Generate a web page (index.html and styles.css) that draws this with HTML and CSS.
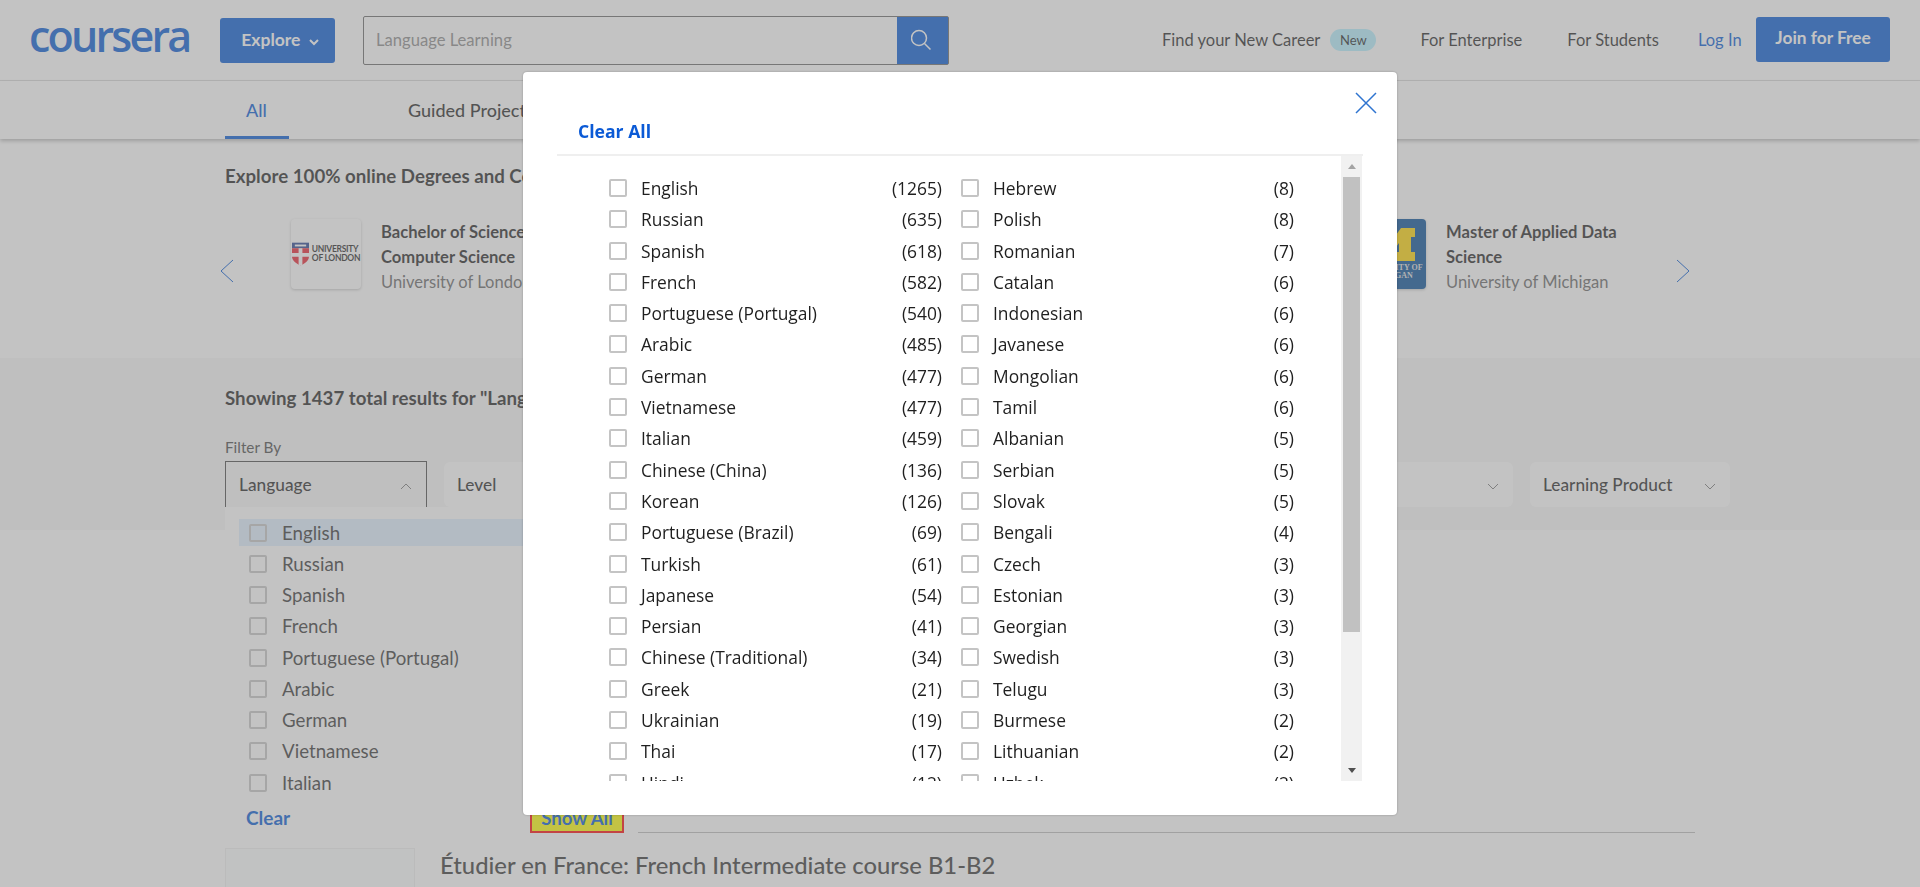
FILE: index.html
```html
<!DOCTYPE html>
<html lang="en">
<head>
  <meta charset="UTF-8">
  <title>Language Learning | Coursera</title>
  <link rel="stylesheet" href="styles.css">
</head>
<body>

  <header class="topbar">
    <div class="logo">coursera</div>
    <button class="explore">Explore
      <svg width="10" height="7" viewBox="0 0 10 7"><path d="M1 1l4 4 4-4" fill="none" stroke="#fff" stroke-width="2"/></svg>
    </button>
    <div class="search">
      <div class="search-text">Language Learning</div>
      <div class="search-btn">
        <svg width="24" height="24" viewBox="0 0 24 24"><circle cx="8" cy="10" r="7.5" fill="none" stroke="#fff" stroke-width="1.5"/><path d="M13.5 15.5l6 6" fill="none" stroke="#fff" stroke-width="1.5"/></svg>
      </div>
    </div>
    <nav class="topnav">
      <a class="career">Find your New Career</a>
      <span class="badge">New</span>
      <a class="enterprise">For Enterprise</a>
      <a class="students">For Students</a>
      <a class="login">Log In</a>
      <button class="join">Join for Free</button>
    </nav>
  </header>

  <div class="tabs">
    <a class="tab active">All</a>
    <a class="tab">Guided Projects</a>
  </div>

  <section class="degrees">
    <h2>Explore 100% online Degrees and Certificates on Coursera</h2>
    <div class="carousel">
      <svg class="arrow prev" width="14" height="24" viewBox="0 0 14 24"><path d="M13 1L1 12l12 11" fill="none" stroke="#0056d2" stroke-width="1"/></svg>
      <div class="degree first">
        <div class="uni-logo london">
          <svg width="17" height="24" viewBox="0 0 18 24"><path d="M0 0h18v6H0z" fill="#23408f"/><path d="M0 6h18v8c0 5-4 8-9 10-5-2-9-5-9-10z" fill="#e8212e"/><path d="M7 6h4v18H7zM0 11h18v4H0z" fill="#fff"/><path d="M3 2h12v2H3z" fill="#fff"/></svg>
          <div class="london-name">UNIVERSITY<br>OF LONDON</div>
        </div>
        <div class="degree-text">
          <div class="degree-title">Bachelor of Science in<br>Computer Science</div>
          <div class="degree-school">University of London</div>
        </div>
      </div>
      <div class="degree">
        <div class="uni-logo michigan">
          <svg width="48" height="33" viewBox="0 0 48 33"><path d="M0 0h14l10 14L34 0h14v9h-4v15h4v9H29v-9h3V15l-8 11-8-11v9h3v9H0v-9h4V9H0z" fill="#ffd400"/></svg>
          <div class="michigan-name">UNIVERSITY OF<br>MICHIGAN</div>
        </div>
        <div class="degree-text">
          <div class="degree-title">Master of Applied Data<br>Science</div>
          <div class="degree-school">University of Michigan</div>
        </div>
      </div>
      <svg class="arrow" width="14" height="24" viewBox="0 0 14 24"><path d="M1 1l12 11L1 23" fill="none" stroke="#0056d2" stroke-width="1"/></svg>
    </div>
  </section>

  <section class="results">
    <h2>Showing 1437 total results for "Language Learning"</h2>
    <div class="filter-label">Filter By</div>
    <div class="filters">
      <div class="filter open">
        <span>Language</span>
        <svg width="12" height="7" viewBox="0 0 12 7"><path d="M1 6l5-5 5 5" fill="none" stroke="#777" stroke-width="1"/></svg>
        <div class="dropdown">
          <label class="drop-row hover"><i class="box"></i>English</label>
          <label class="drop-row"><i class="box"></i>Russian</label>
          <label class="drop-row"><i class="box"></i>Spanish</label>
          <label class="drop-row"><i class="box"></i>French</label>
          <label class="drop-row"><i class="box"></i>Portuguese (Portugal)</label>
          <label class="drop-row"><i class="box"></i>Arabic</label>
          <label class="drop-row"><i class="box"></i>German</label>
          <label class="drop-row"><i class="box"></i>Vietnamese</label>
          <label class="drop-row"><i class="box"></i>Italian</label>
          <a class="drop-clear">Clear</a>
        </div>
      </div>
      <div class="filter level">
        <span>Level</span>
        <svg width="12" height="7" viewBox="0 0 12 7"><path d="M1 1l5 5 5-5" fill="none" stroke="#777" stroke-width="1"/></svg>
      </div>
      <div class="filter product">
        <span>Learning Product</span>
        <svg width="12" height="7" viewBox="0 0 12 7"><path d="M1 1l5 5 5-5" fill="none" stroke="#777" stroke-width="1"/></svg>
      </div>
    </div>
  </section>

  <section class="listing">
    <div class="show-row">
      <a class="show-all">Show All</a>
      <div class="show-line"></div>
    </div>
    <div class="course">
      <div class="course-thumb"></div>
      <div class="course-title">Étudier en France: French Intermediate course B1-B2</div>
    </div>
  </section>

  <div class="overlay">
    <div class="modal">
      <svg class="close" width="22" height="22" viewBox="0 0 22 22"><path d="M1 1l20 20M21 1L1 21" fill="none" stroke="#2f74d0" stroke-width="1.5"/></svg>
      <a class="clear-all">Clear All</a>
      <div class="list-wrap">
        <div class="lang-list">
          <ul class="lang-col">
            <li><i class="box"></i><span>English</span><b>(1265)</b></li>
            <li><i class="box"></i><span>Russian</span><b>(635)</b></li>
            <li><i class="box"></i><span>Spanish</span><b>(618)</b></li>
            <li><i class="box"></i><span>French</span><b>(582)</b></li>
            <li><i class="box"></i><span>Portuguese (Portugal)</span><b>(540)</b></li>
            <li><i class="box"></i><span>Arabic</span><b>(485)</b></li>
            <li><i class="box"></i><span>German</span><b>(477)</b></li>
            <li><i class="box"></i><span>Vietnamese</span><b>(477)</b></li>
            <li><i class="box"></i><span>Italian</span><b>(459)</b></li>
            <li><i class="box"></i><span>Chinese (China)</span><b>(136)</b></li>
            <li><i class="box"></i><span>Korean</span><b>(126)</b></li>
            <li><i class="box"></i><span>Portuguese (Brazil)</span><b>(69)</b></li>
            <li><i class="box"></i><span>Turkish</span><b>(61)</b></li>
            <li><i class="box"></i><span>Japanese</span><b>(54)</b></li>
            <li><i class="box"></i><span>Persian</span><b>(41)</b></li>
            <li><i class="box"></i><span>Chinese (Traditional)</span><b>(34)</b></li>
            <li><i class="box"></i><span>Greek</span><b>(21)</b></li>
            <li><i class="box"></i><span>Ukrainian</span><b>(19)</b></li>
            <li><i class="box"></i><span>Thai</span><b>(17)</b></li>
            <li><i class="box"></i><span>Hindi</span><b>(12)</b></li>
          </ul>
          <ul class="lang-col">
            <li><i class="box"></i><span>Hebrew</span><b>(8)</b></li>
            <li><i class="box"></i><span>Polish</span><b>(8)</b></li>
            <li><i class="box"></i><span>Romanian</span><b>(7)</b></li>
            <li><i class="box"></i><span>Catalan</span><b>(6)</b></li>
            <li><i class="box"></i><span>Indonesian</span><b>(6)</b></li>
            <li><i class="box"></i><span>Javanese</span><b>(6)</b></li>
            <li><i class="box"></i><span>Mongolian</span><b>(6)</b></li>
            <li><i class="box"></i><span>Tamil</span><b>(6)</b></li>
            <li><i class="box"></i><span>Albanian</span><b>(5)</b></li>
            <li><i class="box"></i><span>Serbian</span><b>(5)</b></li>
            <li><i class="box"></i><span>Slovak</span><b>(5)</b></li>
            <li><i class="box"></i><span>Bengali</span><b>(4)</b></li>
            <li><i class="box"></i><span>Czech</span><b>(3)</b></li>
            <li><i class="box"></i><span>Estonian</span><b>(3)</b></li>
            <li><i class="box"></i><span>Georgian</span><b>(3)</b></li>
            <li><i class="box"></i><span>Swedish</span><b>(3)</b></li>
            <li><i class="box"></i><span>Telugu</span><b>(3)</b></li>
            <li><i class="box"></i><span>Burmese</span><b>(2)</b></li>
            <li><i class="box"></i><span>Lithuanian</span><b>(2)</b></li>
            <li><i class="box"></i><span>Uzbek</span><b>(2)</b></li>
          </ul>
        </div>
        <div class="scrollbar">
          <div class="scroll-up"></div>
          <div class="scroll-thumb"></div>
          <div class="scroll-down"></div>
        </div>
      </div>
    </div>
  </div>

</body>
</html>
```

FILE: styles.css
```css
* {
  box-sizing: border-box;
}

html, body {
  height: 887px;
  overflow: hidden;
}

body {
  margin: 0;
  background-color: white;
  color: #1f1f1f;
  font-family: Lato, "Noto Sans", sans-serif;
  font-size: 16px;
}

button {
  border: none;
  font-family: inherit;
  color: white;
  background-color: #0056d2;
  border-radius: 3px;
}

/* header */
.topbar {
  display: flex;
  align-items: center;
  height: 81px;
  padding: 0 30px;
  border-bottom: 1px solid #dcdcdc;
}

.logo {
  width: 190px;
  margin-left: -1px;
  margin-right: 1px;
  color: #0056d2;
  font-family: "Open Sans", sans-serif;
  font-size: 43px;
  font-weight: 600;
  letter-spacing: -2.8px;
  line-height: 40px;
  padding-bottom: 8px;
}

.explore {
  width: 115px;
  height: 45px;
  padding: 0 0 2px 5px;
  font-size: 17.5px;
  font-weight: 700;
}

.explore svg {
  margin-left: 4px;
}

.search {
  display: flex;
  width: 586px;
  height: 49px;
  margin-left: 28px;
  border: 1px solid #666;
  border-radius: 2px;
}

.search-text {
  flex: 1;
  padding-left: 12px;
  color: #888;
  font-size: 16.6px;
  line-height: 46px;
}

.search-btn {
  display: flex;
  align-items: center;
  justify-content: center;
  width: 51px;
  background-color: #0056d2;
}

.topnav {
  display: flex;
  align-items: center;
  flex: 1;
  margin-left: 213px;
  padding-bottom: 1px;
  font-size: 16.5px;
  white-space: nowrap;
}

.badge {
  flex: none;
  width: 46px;
  height: 22px;
  margin-left: 10px;
  border-radius: 11px;
  background-color: #b2efff;
  font-size: 13px;
  line-height: 22px;
  text-align: center;
}

.enterprise {
  margin-left: 44px;
}

.students {
  margin-left: 45px;
}

.login {
  margin-left: 39px;
  color: #0056d2;
}

.join {
  flex: none;
  width: 134px;
  height: 45px;
  margin-left: auto;
  padding-bottom: 6px;
  font-size: 17.3px;
  font-weight: 700;
}

/* tabs */
.tabs {
  display: flex;
  height: 58px;
  padding-left: 225px;
  box-shadow: 0 2px 4px rgba(0, 0, 0, 0.3);
  position: relative;
}

.tab {
  width: 162px;
  padding: 18px 0 0 21px;
  font-size: 18px;
  font-weight: 500;
  white-space: nowrap;
}

.tab.active {
  position: relative;
  width: 162px;
  color: #0056d2;
}

.tab.active::after {
  content: "";
  position: absolute;
  left: 0;
  bottom: 0;
  width: 64px;
  height: 3px;
  background-color: #0056d2;
}

/* degrees */
.degrees {
  height: 219px;
  padding: 25px 230px 0 225px;
}

h2 {
  margin: 0;
  font-size: 18.7px;
  font-weight: 700;
  line-height: 24px;
  white-space: nowrap;
}

.carousel {
  display: flex;
  align-items: center;
  margin-top: 33px;
  height: 72px;
}

.arrow {
  flex: none;
  margin-top: 28px;
}

.arrow.prev {
  margin-left: -5px;
}

.degree {
  display: flex;
  width: 320px;
  margin-left: auto;
}

.degree.first {
  margin-left: 57px;
}

.uni-logo {
  flex: none;
  width: 70px;
  height: 70px;
  border-radius: 4px;
  box-shadow: 0 1px 3px rgba(0, 0, 0, 0.25);
}

.london {
  display: flex;
  align-items: center;
  justify-content: center;
  gap: 3px;
}

.london-name {
  font-size: 8.5px;
  font-weight: 700;
  line-height: 9px;
  white-space: nowrap;
  letter-spacing: -0.3px;
}

.michigan {
  padding-top: 9px;
  background-color: #004a94;
  text-align: center;
}

.michigan svg {
  display: block;
  margin: 0 auto;
}

.michigan-name {
  margin-top: 3px;
  font-family: "Liberation Serif", serif;
  font-size: 8px;
  font-weight: 700;
  line-height: 8px;
  color: #ddd;
}

.degree-text {
  margin-left: 20px;
  padding-top: 1px;
  width: 230px;
}

.degree-title {
  font-size: 16.6px;
  font-weight: 700;
  line-height: 25px;
  white-space: nowrap;
}

.degree-school {
  color: #636363;
  font-size: 16.5px;
  line-height: 25px;
}

/* results band */
.results {
  height: 172px;
  padding: 28px 190px 0 225px;
  background-color: #f6f6f6;
}

.filter-label {
  margin-top: 27px;
  font-size: 15.3px;
  line-height: 20px;
  color: #444;
}

.filters {
  display: flex;
  gap: 17px;
  margin-top: 5px;
}

.filter {
  display: flex;
  align-items: center;
  justify-content: space-between;
  height: 45px;
  padding: 0 14px 0 13px;
  border-radius: 6px;
  background-color: white;
  font-size: 17.3px;
  font-weight: 500;
}

.filter svg {
  margin-top: 4px;
}

.filter.open {
  position: relative;
  flex: none;
  width: 202px;
  height: 46px;
  margin-top: -1px;
  border: 1px solid #444;
  border-bottom: none;
  border-radius: 0;
  background-color: transparent;
}

.filter.level {
  flex: 1;
}

.filter.product {
  flex: none;
  width: 200px;
}

.dropdown {
  position: absolute;
  top: 45px;
  left: -1px;
  width: 300px;
  height: 323px;
  padding: 12px 0 0 14px;
  background-color: white;
}

.drop-row {
  display: flex;
  align-items: center;
  height: 31.3px;
  font-size: 18.7px;
  font-weight: 400;
  color: #333;
}

.drop-row.hover {
  height: 27px;
  margin-bottom: 2px;
  background-color: #deeefe;
}

.drop-row .box {
  margin: 0 15px 0 10px;
}

.drop-clear {
  display: block;
  margin: 8px 0 0 7px;
  color: #0056d2;
  font-size: 19px;
  font-weight: 700;
}

/* listing below */
.listing {
  height: 357px;
  padding-left: 225px;
  overflow: hidden;
}

.show-row {
  display: flex;
  align-items: flex-end;
  height: 303px;
}

.show-all {
  width: 94px;
  height: 30px;
  margin-left: 305px;
  border: 2px solid #ff0000;
  background-color: yellow;
  color: #0056d2;
  font-size: 18.6px;
  font-weight: 700;
  text-align: center;
  line-height: 26px;
}

.show-line {
  width: 1057px;
  height: 1px;
  margin-left: 14px;
  background-color: #bbb;
}

.course {
  display: flex;
  margin-top: 15px;
}

.course-thumb {
  width: 190px;
  height: 100px;
  border: 1px solid #eee;
  background-color: #fbfdfd;
}

.course-title {
  margin: 3px 0 0 25px;
  font-size: 23.8px;
  font-weight: 500;
  color: #333;
}

/* modal */
.overlay {
  position: fixed;
  top: 0;
  left: 0;
  right: 0;
  bottom: 0;
  display: flex;
  justify-content: center;
  align-items: flex-start;
  padding-top: 72px;
  background-color: rgba(136, 136, 136, 0.5);
}

.modal {
  position: relative;
  width: 874px;
  height: 743px;
  padding: 0 34px 0 34px;
  border-radius: 4px;
  background-color: white;
  box-shadow: 0 0 2px rgba(0, 0, 0, 0.3);
  color: #1f1f1f;
  font-family: "Open Sans", sans-serif;
}

.close {
  position: absolute;
  top: 20px;
  right: 20px;
}

.clear-all {
  display: block;
  height: 84px;
  padding: 47px 0 0 21px;
  border-bottom: 2px solid #efefef;
  color: #0b5ad6;
  font-size: 17.6px;
  font-weight: 700;
  line-height: 24px;
}

.list-wrap {
  display: flex;
  justify-content: space-between;
  height: 625px;
  margin-right: 1px;
}

.lang-list {
  display: flex;
  gap: 19px;
  height: 100%;
  padding: 16.3px 0 0 52px;
  overflow: hidden;
}

.lang-col {
  width: 333px;
  margin: 0;
  padding: 0;
  list-style: none;
}

.lang-col li {
  display: flex;
  align-items: center;
  height: 31.3px;
  font-size: 17.4px;
}

.lang-col span {
  flex: 1;
  margin-left: 14px;
}

.lang-col b {
  font-weight: 400;
}

.box {
  flex: none;
  width: 18px;
  height: 18px;
  border: 2px solid #c4c4c4;
  border-radius: 2px;
}

/* the scrollbar of the list, drawn so it looks as in windows */
.scrollbar {
  display: flex;
  flex-direction: column;
  align-items: center;
  width: 21px;
  background-color: #f1f1f1;
}

.scroll-up {
  width: 0;
  height: 0;
  margin: 8px 0 8px;
  border-left: 4px solid transparent;
  border-right: 4px solid transparent;
  border-bottom: 5px solid #a3a3a3;
}

.scroll-thumb {
  width: 17px;
  height: 455px;
  background-color: #c1c1c1;
}

.scroll-down {
  width: 0;
  height: 0;
  margin-top: auto;
  margin-bottom: 8px;
  border-left: 4px solid transparent;
  border-right: 4px solid transparent;
  border-top: 5px solid #505050;
}
```
